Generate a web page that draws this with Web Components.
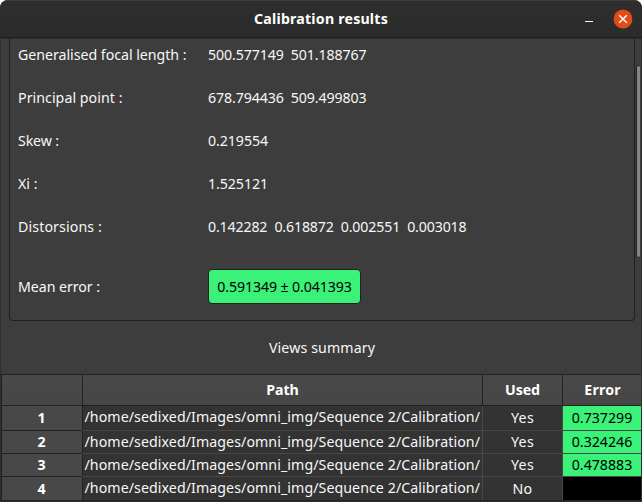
<!DOCTYPE html>
<html lang="en">
<head>
<meta charset="utf-8">
<title>Calibration results</title>
<style>
html,body{margin:0;height:100%;background:#fff;overflow:hidden}
body{font:14.2px/20px "Noto Sans","Open Sans",sans-serif;color:#f7f7f7}
</style>
</head>
<body>
<calib-window></calib-window>
<script>
const define = (name, html, setup) => customElements.define(name, class extends HTMLElement {
  connectedCallback() {
    if (this.shadowRoot) return;
    this.attachShadow({mode: 'open'}).innerHTML = html;
    if (setup) setup(this, this.shadowRoot);
  }
});

// A run of text whose tracking is adjusted so that it fills a given advance width.
define('fit-text', `<style>
:host{display:inline-block;white-space:pre;flex:none;text-align:left}
span{display:inline-block}
</style><span></span>`, (el, root) => {
  const s = root.querySelector('span'), w = +el.getAttribute('w'), t = el.getAttribute('text');
  s.textContent = t;
  el.style.width = w + 'px';
  const n = s.getBoundingClientRect().width;
  s.style.letterSpacing = (w - n) / t.length + 'px';
});

define('title-bar', `<style>
:host{display:grid;grid-template-columns:1fr auto 1fr;align-items:center;height:38px;box-sizing:border-box;
 background:linear-gradient(#2e2e2e,#2b2b2b);border-top:1px solid #3c3c3c;border-bottom:1px solid #202020;font-weight:700;padding:0 9px 0 9px;color:#fff}
.buttons{display:flex;justify-content:flex-end;align-items:center;gap:20px}
svg{display:block}
</style><i></i><slot></slot><div class="buttons">
<svg width="8" height="20"><path d="M0 12.5h8" stroke="#fff"/></svg>
<svg width="20" height="20"><circle cx="10" cy="10" r="9.4" fill="#e24b18"/><path d="M6.2 6.2l7.6 7.6M13.8 6.2l-7.6 7.6" stroke="#fff" stroke-width="1.5"/></svg>
</div>`);

define('param-row', `<style>
:host{display:grid;grid-template-columns:190px 1fr;align-items:center;height:43px;padding-left:8px}
:host([tall]){height:77px}
</style><slot name="label"></slot><slot></slot>`);

define('error-badge', `<style>
:host{display:flex;align-items:center;justify-content:center;justify-self:start;width:153px;height:35px;box-sizing:border-box;
 border:1px solid #202020;border-radius:4px;background:#39f277;color:#000}
</style><slot></slot>`);

define('param-panel', `<style>
:host{display:flow-root;margin:0 6px 0 8px;height:283px;box-sizing:border-box;border:1px solid #212121;border-top:0;border-radius:0 0 4px 4px}
.rows{display:block;margin-top:-5px}
</style><div class="rows"><slot></slot></div>`);

define('view-row', `<style>
:host{display:grid;grid-template-columns:80px 399px 79px 78px;column-gap:1px;height:var(--h,22px);line-height:20px;border-bottom:1px solid #484848;background:#484848}
div{display:flex;justify-content:center;align-items:flex-start;background:#333;overflow:hidden}
.n{background:#484848;font-weight:700;color:#fff;box-shadow:1px 0 #222,0 1px #222;overflow:visible}
.path{justify-content:flex-start;padding-left:1.5px}
.n{padding-top:var(--nt,1px)}.path{padding-top:var(--pt,0px)}.u,.e{padding-top:var(--ut,0px)}
.e{background:#39f277;color:#000}
:host([unused]) .e{background:#000}
:host([unused]){border-color:#222}
</style><div class="n"><slot name="n"></slot></div><div class="path"><slot name="path"></slot></div><div class="u"><slot name="used"></slot></div><div class="e"><slot name="error"></slot></div>`);

define('views-table', `<style>
:host{display:block;border:1px solid #222;border-right:0;border-bottom:0}
header{display:grid;grid-template-columns:80px 399px 79px 78px;column-gap:1px;height:30px;background:#222;border-bottom:1px solid #222;font-weight:700;color:#fff}
header div{display:flex;align-items:center;justify-content:center;background:linear-gradient(#494949,#464646)}
</style><header><div></div><div><fit-text text="Path" w="32.5"></fit-text></div><div><fit-text text="Used" w="35"></fit-text></div><div style="padding-left:1px"><fit-text text="Error" w="36.5"></fit-text></div></header><slot></slot>`);

define('scroll-thumb', `<style>
:host{position:absolute;left:635px;top:27px;width:3px;height:191px;border:1px solid #252525;border-right:0;border-radius:2px;background:#858585}
</style>`);

const params = [
  ['Generalised focal length :', 168.5, '500.577149  501.188767', 158.5],
  ['Principal point :', 104.5, '678.794436  509.499803', 158.5],
  ['Skew :', 41, '0.219554', 60],
  ['Xi :', 19.5, '1.525121', 60],
  ['Distorsions :', 84, '0.142282  0.618872  0.002551  0.003018', 258.5],
];
const views = [
  [1, 'Yes', '0.737299', '--h:24px;--pt:1px;--ut:2px;--nt:2px'],
  [2, 'Yes', '0.324246', '--h:22px;--pt:1px;--ut:1px;--nt:1px'],
  [3, 'Yes', '0.478883', '--h:22px;--pt:1px;--ut:1px;--nt:1px'],
  [4, 'No', '', '--h:23px;--pt:1px;--ut:2px;--nt:2px'],
];

define('calib-window', `<style>
:host{display:block;width:642px;height:502px;box-sizing:border-box;overflow:hidden;border-radius:8px 8px 0 0;background:#2f2f2f}
main{position:relative;height:463px;margin:0 1px;background:#3d3d3d;overflow:hidden;box-shadow:inset 0 1px #303030}
h2{margin:0;font:inherit;height:53px;display:flex;align-items:center;justify-content:center;padding-left:2px}
</style>
<title-bar><fit-text text="Calibration results" w="134"></fit-text></title-bar>
<main>
<param-panel>
${params.map(([l, lw, v, vw]) => `<param-row><fit-text slot="label" text="${l}" w="${lw}"></fit-text><fit-text text="${v}" w="${vw}"></fit-text></param-row>`).join('')}
<param-row tall><fit-text slot="label" text="Mean error :" w="82"></fit-text><error-badge><fit-text text="0.591349 ± 0.041393" w="134.5"></fit-text></error-badge></param-row>
</param-panel>
<h2><fit-text text="Views summary" w="106"></fit-text></h2>
<views-table>
${views.map(([n, u, e, st]) => `<view-row style="${st}" ${e ? '' : 'unused'}><fit-text slot="n" text="${n}" w="9"></fit-text><fit-text slot="path" text="/home/sedixed/Images/omni_img/Sequence 2/Calibration/" w="395.5"></fit-text><fit-text slot="used" text="${u}" w="${u === 'Yes' ? 23 : 20}"></fit-text>${e ? `<fit-text slot="error" text="${e}" w="60.5"></fit-text>` : ''}</view-row>`).join('')}
</views-table>
<scroll-thumb></scroll-thumb>
</main>`);
</script>
</body>
</html>
